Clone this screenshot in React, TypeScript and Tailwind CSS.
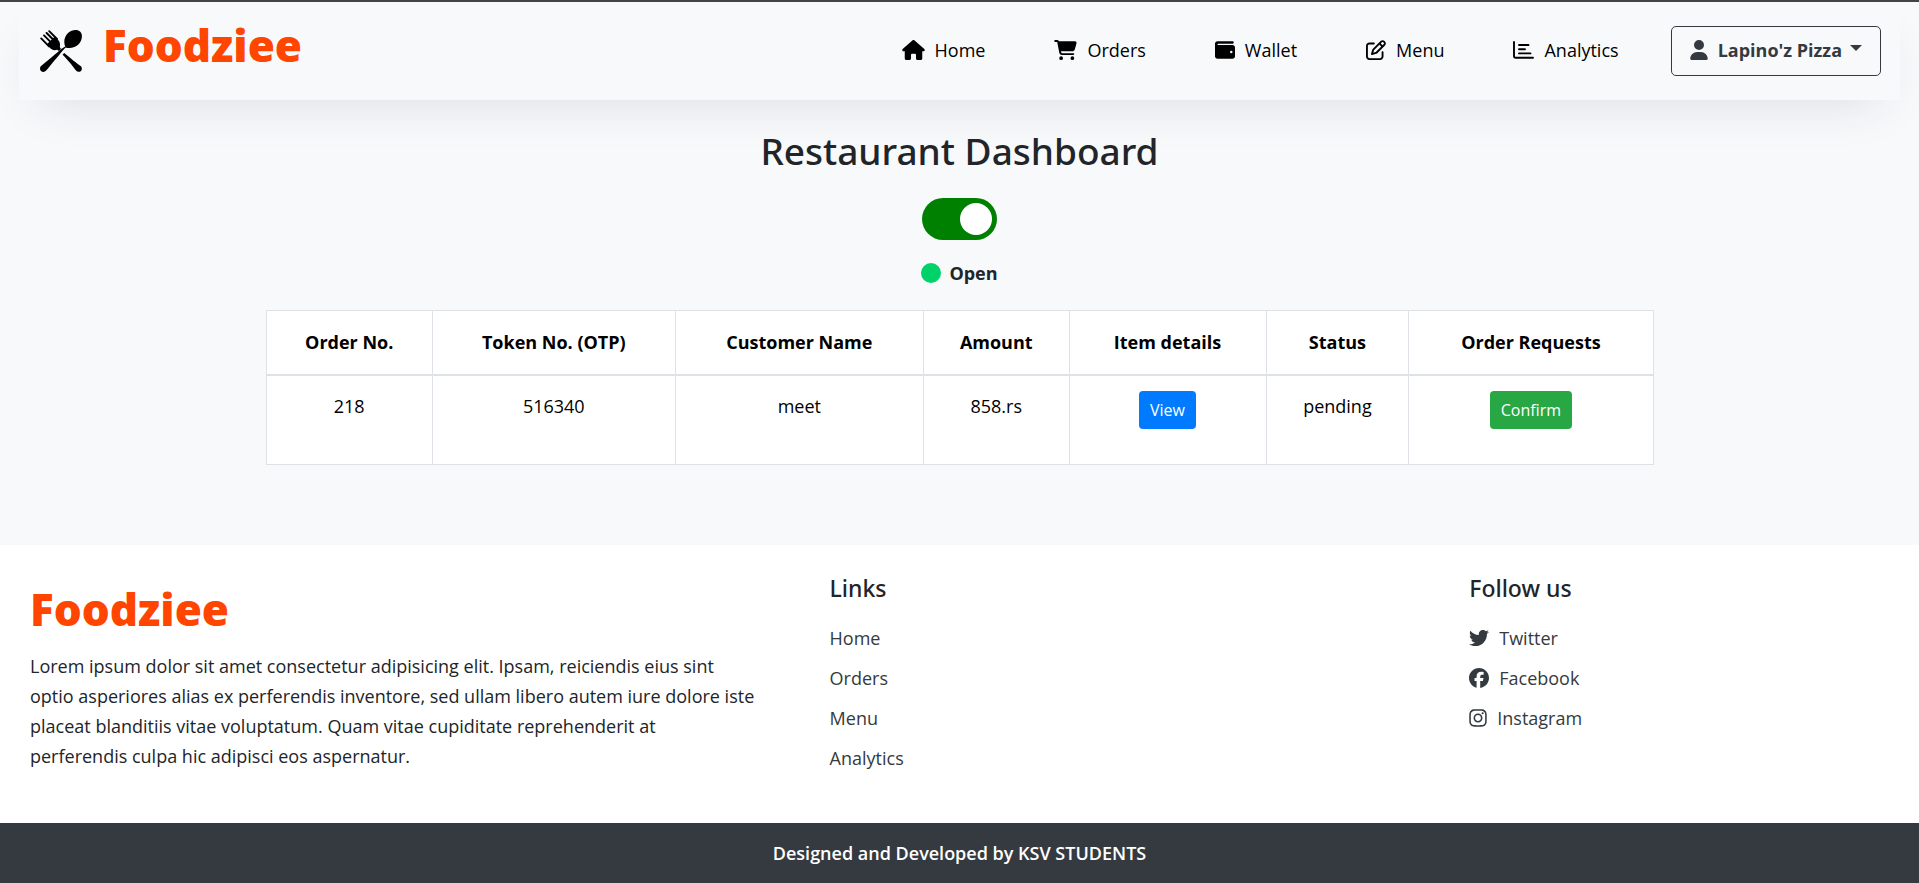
import type { ReactNode } from "react";
import {
  FaCartShopping,
  FaFacebook,
  FaHouse,
  FaInstagram,
  FaRegPenToSquare,
  FaTwitter,
  FaUser,
  FaWallet,
} from "react-icons/fa6";

function UtensilsLogo() {
  return (
    <svg viewBox="0 0 42 42" className="size-[42px]" aria-hidden="true">
      <g fill="none" stroke="#000" strokeLinecap="round">
        <path d="M1.2 8.4 L9 16.4 M4 5.4 L12 13.4 M6.6 3 L14.6 11 M9.2 1.2 L17 9" strokeWidth="1.9" />
      </g>
      <path
        d="M6.6 14.4 L14.8 6.4 L17.8 9.6 C20.4 12.4 20.2 15 19.8 17 L21 19 L19 21 L17 19.8 C14.4 20.6 12 20.2 9.6 17.6 Z"
        fill="#000"
      />
      <path
        d="M24.2 23 C27 25 34 31.4 40.6 36 C42.2 37.4 42.2 39.6 41 40.9 C39.6 42.2 37.4 42.2 36 40.6 C32 35 26.4 28.6 22.6 24.8 Z"
        fill="#000"
      />
      <path
        d="M25.2 16.4 C23.4 12.4 24.2 6.4 28 2.9 C31.8 -.4 37.6 -1 40.3 1.7 C43 4.4 42.2 10.2 38.9 13.9 C35.4 17.7 29.6 18.8 25.6 17.4 L22.8 20.4 C18.6 25.6 11.4 34 6.2 40.6 C4.8 42.2 2.4 42.4 1 41 C-.4 39.6 -.3 37.2 1.4 35.8 C8.4 30.2 16.6 23 21.6 18.8 Z"
        fill="#000"
      />
    </svg>
  );
}

function ChartIcon() {
  return (
    <svg viewBox="0 0 21 18" className="h-[18px] w-[21px]" fill="none" stroke="currentColor" strokeWidth="1.9" strokeLinecap="round" aria-hidden="true">
      <path d="M1 1 V15 Q1 16.8 2.8 16.8 H20 M6 4 H15.5 M6 8.2 H12 M6 12.4 H17.5" />
    </svg>
  );
}

function Wordmark() {
  return (
    <span className="block font-['Noto_Sans',sans-serif] text-[44px] leading-[44px] font-black text-[#ff4500]">
      Foodziee
    </span>
  );
}

const navItems: { label: string; icon: ReactNode }[] = [
  { label: "Home", icon: <FaHouse className="h-5 w-[23px]" /> },
  { label: "Orders", icon: <FaCartShopping className="h-5 w-[23px]" /> },
  { label: "Wallet", icon: <FaWallet className="size-5" /> },
  { label: "Menu", icon: <FaRegPenToSquare className="size-5" /> },
  { label: "Analytics", icon: <ChartIcon /> },
];

const columns = [
  { label: "Order No.", width: "w-[12%]" },
  { label: "Token No. (OTP)", width: "w-[17.5%]" },
  { label: "Customer Name", width: "w-[17.9%]" },
  { label: "Amount", width: "w-[10.5%]" },
  { label: "Item details", width: "w-[14.2%]" },
  { label: "Status", width: "w-[10.3%]" },
  { label: "Order Requests", width: "w-[17.6%]" },
];

const socials = [
  { label: "Twitter", icon: <FaTwitter className="size-5" /> },
  { label: "Facebook", icon: <FaFacebook className="size-5" /> },
  { label: "Instagram", icon: <FaInstagram className="h-5 w-[18px]" /> },
];

const cell = "border border-[#dee2e6] px-4 pt-[15px] align-top";
const footerHeading = "font-['Noto_Sans',sans-serif] text-[23px] font-medium";

export default function App() {
  return (
    <div className="flex min-h-screen flex-col border-t-2 border-[#444] bg-[#f8f9fb] font-['Open_Sans','Noto_Sans',sans-serif] text-[18px] leading-[30px] text-[#212529]">
      <header className="mx-[19px] flex h-[98px] items-center justify-between pr-[19px] pl-[21px] shadow-[0_20px_50px_-20px_rgba(40,44,63,0.15)]">
        <a href="#" className="flex items-center gap-[21px]">
          <UtensilsLogo />
          <span className="pb-3">
            <Wordmark />
          </span>
        </a>
        <div className="flex items-center gap-[52px]">
          <nav className="flex items-center gap-[69px] pb-[2px] text-black">
            {navItems.map((item) => (
              <a key={item.label} href="#" className="flex items-center gap-[10px]">
                {item.icon}
                {item.label}
              </a>
            ))}
          </nav>
          <button type="button" className="flex h-[50px] items-center rounded-[5px] border border-[#343a40] px-[18px] pb-[2px] font-bold text-[#343a40]">
            <FaUser className="mr-[10px] h-5 w-[18px]" />
            Lapino'z Pizza
            <svg viewBox="0 0 12 6" className="mb-1 ml-2 h-[6px] w-3" aria-hidden="true">
              <path d="M0 0 H12 L6 6 Z" fill="currentColor" />
            </svg>
          </button>
        </div>
      </header>

      <main className="flex flex-col items-center px-4 pt-[27px] pb-20">
        <h1 className="font-['Noto_Sans',sans-serif] text-[37px] leading-[48px] font-medium">Restaurant Dashboard</h1>
        <input
          type="checkbox"
          defaultChecked
          aria-label="Restaurant open"
          className="mt-[23px] flex h-[42px] w-[75px] appearance-none items-center justify-start rounded-full bg-gray-400 p-[5px] before:size-8 before:rounded-full before:bg-white checked:justify-end checked:bg-[#008000]"
        />
        <p className="mt-[18px] flex items-center gap-2 font-bold">
          <span className="size-5 rounded-full bg-[#00d26a]" />
          Open
        </p>
        <table className="mt-[22px] w-full max-w-[1388px] table-fixed border-collapse bg-white text-center text-black">
          <thead>
            <tr>
              {columns.map((c) => (
                <th key={c.label} className={`${c.width} border border-b-2 border-[#dee2e6] pt-4 pb-[17px] font-bold`}>
                  {c.label}
                </th>
              ))}
            </tr>
          </thead>
          <tbody>
            <tr className="h-[89px]">
              <td className={cell}>218</td>
              <td className={cell}>516340</td>
              <td className={cell}>meet</td>
              <td className={cell}>858.rs</td>
              <td className={cell}>
                <button type="button" className="h-[38px] rounded-[4px] bg-[#007bff] px-[11px] text-base text-white">View</button>
              </td>
              <td className={cell}>pending</td>
              <td className={cell}>
                <button type="button" className="h-[38px] rounded-[4px] bg-[#28a745] px-[11px] text-base text-white">Confirm</button>
              </td>
            </tr>
          </tbody>
        </table>
      </main>

      <footer className="flex flex-1 flex-col bg-white">
        <div className="grid flex-1 grid-cols-12 pb-[50px]">
          <section className="col-span-5 px-[30px] pt-[42px]">
            <Wordmark />
            <p className="mt-5">
              Lorem ipsum dolor sit amet consectetur adipisicing elit. Ipsam, reiciendis eius sint
              <br />
              optio asperiores alias ex perferendis inventore, sed ullam libero autem iure dolore iste
              <br />
              placeat blanditiis vitae voluptatum. Quam vitae cupiditate reprehenderit at
              <br />
              perferendis culpa hic adipisci eos aspernatur.
            </p>
          </section>
          <section className="col-span-4 px-[30px] pt-7">
            <h2 className={footerHeading}>Links</h2>
            <ul className="mt-5 flex flex-col gap-[10px] text-[#343a40]">
              {["Home", "Orders", "Menu", "Analytics"].map((label) => (
                <li key={label}>
                  <a href="#">{label}</a>
                </li>
              ))}
            </ul>
          </section>
          <section className="col-span-3 px-[30px] pt-7">
            <h2 className={footerHeading}>Follow us</h2>
            <ul className="mt-5 flex flex-col gap-[10px] text-[#343a40]">
              {socials.map((s) => (
                <li key={s.label}>
                  <a href="#" className="flex items-center gap-[10px]">
                    {s.icon}
                    {s.label}
                  </a>
                </li>
              ))}
            </ul>
          </section>
        </div>
        <p className="bg-[#343a40] py-[15px] text-center font-semibold text-white">Designed and Developed by KSV STUDENTS</p>
      </footer>
    </div>
  );
}
